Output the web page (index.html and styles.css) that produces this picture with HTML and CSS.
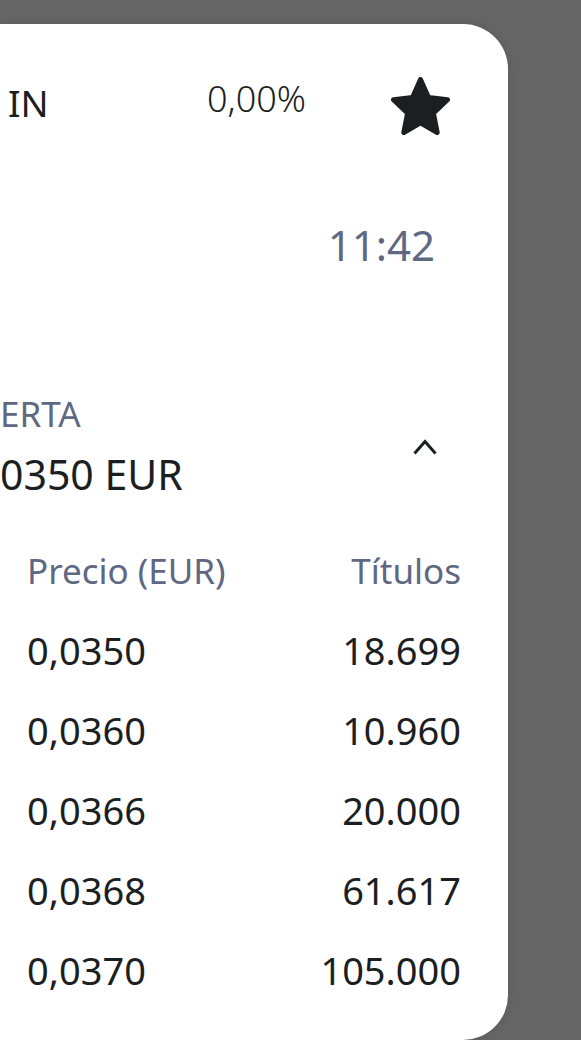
FILE: index.html
```html
<!DOCTYPE html>
<html lang="es">
<head>
    <meta charset="UTF-8">
    <meta name="viewport" content="width=device-width, initial-scale=1.0">
    <title>Detalle del valor</title>
    <link rel="stylesheet" href="styles.css">
</head>
<body>
    <div class="card">
        <div class="quote-head">
            <span class="quote-name">IN</span>
            <span class="quote-change">0,00%</span>
            <button class="fav" aria-label="Favorito">
                <svg width="59" height="58" viewBox="0 0 59 58">
                    <polygon points="29.5,2.5 37.5,20.4 56.5,22.75 42.4,36.2 46.2,55.5 29.5,45.9 12.8,55.5 16.6,36.2 2.5,22.75 21.5,20.4" fill="#1c1f21" stroke="#1c1f21" stroke-width="5" stroke-linejoin="round"/>
                </svg>
            </button>
        </div>

        <div class="quote-time">11:42</div>

        <div class="offer">
            <div class="offer-info">
                <div class="offer-label">ERTA</div>
                <div class="offer-price">0350 EUR</div>
            </div>
            <button class="toggle" aria-label="Ocultar">
                <svg width="24" height="16" viewBox="0 0 24 16">
                    <polyline points="1.5,14.5 12,2.5 22.5,14.5" fill="none" stroke="#1c1f21" stroke-width="3"/>
                </svg>
            </button>
        </div>

        <div class="book">
            <div class="book-row book-head">
                <span>Precio (EUR)</span>
                <span>Títulos</span>
            </div>
            <div class="book-row">
                <span>0,0350</span>
                <span>18.699</span>
            </div>
            <div class="book-row">
                <span>0,0360</span>
                <span>10.960</span>
            </div>
            <div class="book-row">
                <span>0,0366</span>
                <span>20.000</span>
            </div>
            <div class="book-row">
                <span>0,0368</span>
                <span>61.617</span>
            </div>
            <div class="book-row">
                <span>0,0370</span>
                <span>105.000</span>
            </div>
        </div>
    </div>
</body>
</html>
```

FILE: styles.css
```css
* {
    margin: 0;
    padding: 0;
    box-sizing: border-box;
    font-family: 'Noto Sans', 'Open Sans', sans-serif;
}

body {
    height: 1040px;
    overflow: hidden;
    background: #666666;
    color: #1c1f21;
}

button {
    border: none;
    background: none;
    cursor: pointer;
    display: flex;
}

.card {
    width: 508px;
    height: 1016px;
    margin-top: 24px;
    background: #ffffff;
    border-radius: 0 45px 45px 0;
    box-shadow: 0 0 14px rgba(0, 0, 0, 0.12);
}

.quote-head {
    display: flex;
    align-items: flex-start;
    padding: 53px 58px 0 8px;
}

.quote-name {
    flex: 1;
    font-size: 37px;
    line-height: 44px;
    margin-top: 4px;
}

.quote-change {
    font-size: 36px;
    font-weight: 300;
    line-height: 44px;
    margin-right: 85px;
}

.quote-time {
    margin-top: 86px;
    padding-right: 73px;
    text-align: right;
    font-size: 42px;
    line-height: 48px;
    color: #5f6883;
}

.offer {
    display: flex;
    align-items: center;
    margin-top: 123px;
    padding-right: 71px;
}

.offer-info {
    flex: 1;
}

.offer-label {
    font-size: 35px;
    line-height: 44px;
    color: #5f6883;
    margin-bottom: 14px;
}

.offer-price {
    font-size: 41px;
    line-height: 48px;
}

.toggle {
    margin-top: 4px;
}

.book {
    margin-top: 32px;
    padding: 0 47px 0 27px;
}

.book-row {
    display: flex;
    justify-content: space-between;
    align-items: center;
    height: 80px;
    font-size: 38px;
}

.book-head {
    font-size: 35px;
    color: #5f6883;
}
```
